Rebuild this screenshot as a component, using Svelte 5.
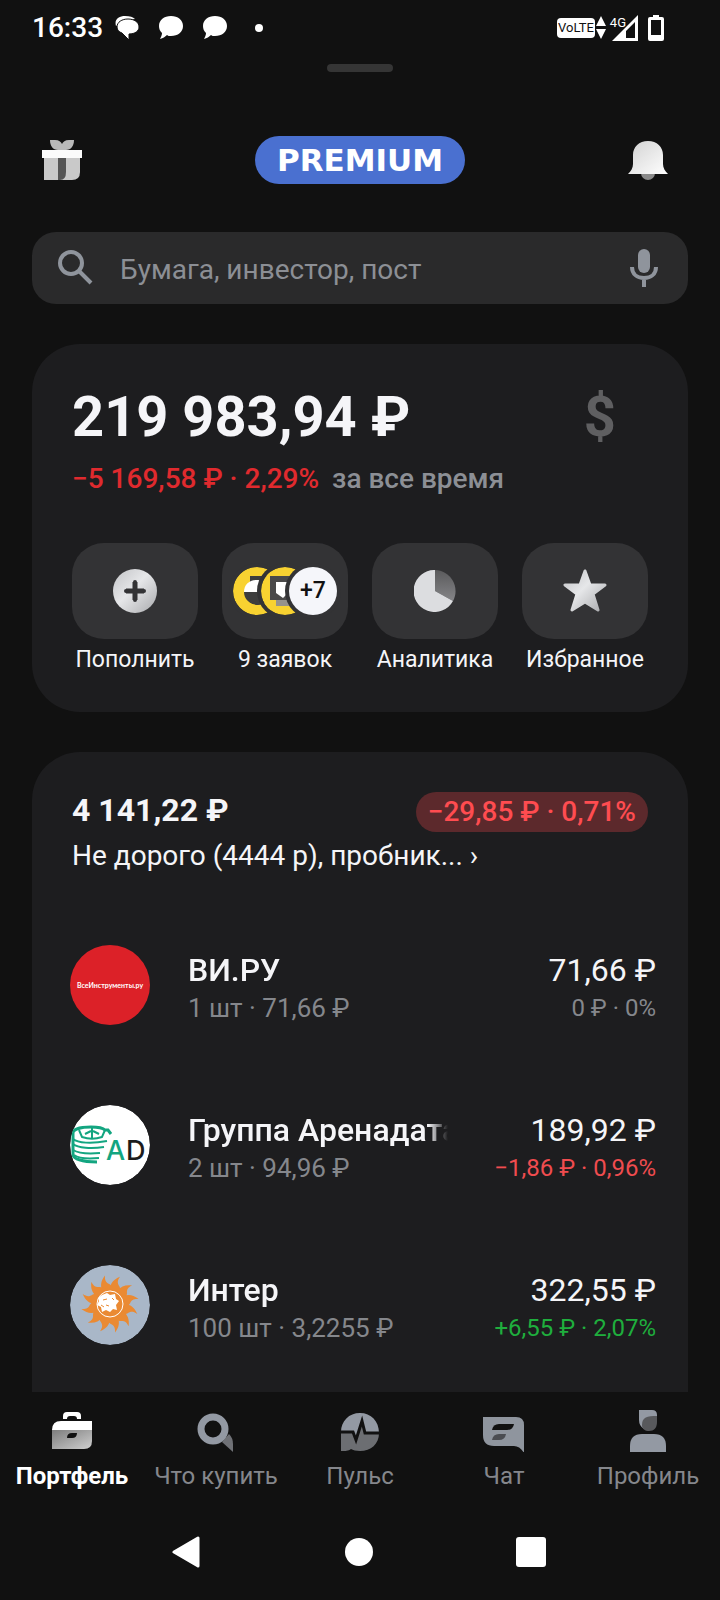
<script>
    let query = ""
    let activeTab = "portfolio"

    const actions = [
        {id: "topup", title: "Пополнить"},
        {id: "orders", title: "9 заявок"},
        {id: "analytics", title: "Аналитика"},
        {id: "favourites", title: "Избранное"}
    ]

    const holdings = [
        {logo: "vi", title: "ВИ.РУ", amount: "1 шт · 71,66 ₽", price: "71,66 ₽", change: "0 ₽ · 0%", trend: "flat"},
        {logo: "ad", title: "Группа Аренадата", amount: "2 шт · 94,96 ₽", price: "189,92 ₽", change: "−1,86 ₽ · 0,96%", trend: "down"},
        {logo: "inter", title: "Интер", amount: "100 шт · 3,2255 ₽", price: "322,55 ₽", change: "+6,55 ₽ · 2,07%", trend: "up"}
    ]

    const tabs = [
        {id: "portfolio", title: "Портфель"},
        {id: "buy", title: "Что купить"},
        {id: "pulse", title: "Пульс"},
        {id: "chat", title: "Чат"},
        {id: "profile", title: "Профиль"}
    ]

    // angles of the sun rays in the Inter logo
    const rays = Array.from({length: 12}, (_, i) => i * 30 - 8)
</script>

<svelte:head>
    <title>Портфель</title>
</svelte:head>

<div class="app">
<div class="status">
    <span class="clock">16:33</span>
    <svg class="bubble" width="24" height="24" viewBox="0 0 24 24">
        <path d="M1 10C-1 3 4 0 10 0c5 0 8 1 10 3l-6 1z" fill="#fff"/>
        <path d="M13 3c6 0 11 3 11 8 0 4-4 7-10 7v6l-7-7C4 16 2 14 2 11c0-5 5-8 11-8z" fill="#fff" stroke="#111" stroke-width="1"/>
    </svg>
    <svg class="bubble" width="24" height="24" viewBox="0 0 24 24">
        <path d="M12 0c7 0 12 4 12 10s-5 10-12 10c-2 0-3 0-4-1-2 2-4 3-7 4 1-2 2-4 2-6C1 15 0 13 0 10 0 4 5 0 12 0z" fill="#fff"/>
    </svg>
    <svg class="bubble" width="24" height="24" viewBox="0 0 24 24">
        <path d="M12 0c7 0 12 4 12 10s-5 10-12 10c-2 0-3 0-4-1-2 2-4 3-7 4 1-2 2-4 2-6C1 15 0 13 0 10 0 4 5 0 12 0z" fill="#fff"/>
    </svg>
    <span class="dot"></span>
    <span class="volte">VoLTE</span>
    <svg class="updown" width="10" height="24" viewBox="0 0 10 24">
        <path d="M5 0l5 10H0zM5 23L0 13h10z" fill="#fff"/>
    </svg>
    <div class="signal">
        <span>4G</span>
        <svg width="26" height="26" viewBox="0 0 26 26">
            <path d="M26 0v26H0zM23 7l-9 9v7h9z" fill="#fff" fill-rule="evenodd"/>
        </svg>
    </div>
    <svg width="16" height="26" viewBox="0 0 16 26">
        <path d="M5 0h6v2h3q2 0 2 2v20q0 2-2 2H2q-2 0-2-2V4q0-2 2-2h3zM3 5v15h10V5z" fill="#fff" fill-rule="evenodd"/>
    </svg>
</div>

<div class="handle"></div>

<header class="top">
    <button class="icon-button" aria-label="Подарки">
        <svg width="40" height="40" viewBox="0 0 40 40">
            <path d="M8 0h5c4 0 6 2 7 4 1-2 3-4 7-4h5c0 6-3 10-8 10h-8C11 10 8 6 8 0z" fill="#b9b9b9"/>
            <path d="M2 18h36v14q0 8-8 8H2z" fill="#c9c9c9"/>
            <path d="M16 18h8v14q0 8-6 8h-2z" fill="#555"/>
            <path d="M0 10h40v8H0z" fill="#fbfbfb"/>
        </svg>
    </button>
    <span class="premium">PREMIUM</span>
    <button class="icon-button" aria-label="Уведомления">
        <svg width="40" height="40" viewBox="0 0 40 40">
            <defs>
                <linearGradient id="bell" x1="0" y1="0" x2="1" y2="1">
                    <stop offset="0" stop-color="#d2d2d2"/>
                    <stop offset="1" stop-color="#fff"/>
                </linearGradient>
            </defs>
            <circle cx="20" cy="33" r="7" fill="#8b8b8b"/>
            <path d="M20 1c9 0 15 6 15 14v9c0 4 2 7 5 10H0c3-3 5-6 5-10v-9C5 7 11 1 20 1z" fill="url(#bell)"/>
        </svg>
    </button>
</header>

<form class="search" on:submit|preventDefault>
    <svg width="36" height="36" viewBox="0 0 36 36">
        <circle cx="13" cy="13" r="11" fill="none" stroke="#8f949c" stroke-width="4"/>
        <path d="M21 21l12 12" stroke="#8f949c" stroke-width="4"/>
    </svg>
    <input type="text" bind:value={query} placeholder="Бумага, инвестор, пост" aria-label="Поиск">
    <button class="icon-button" type="button" aria-label="Голосовой поиск">
        <svg width="28" height="38" viewBox="0 0 28 38">
            <rect x="8" y="0" width="12" height="24" rx="6" fill="#8f949c"/>
            <path d="M2 18c0 7 5 11 12 11s12-4 12-11M14 29v9" fill="none" stroke="#8f949c" stroke-width="4"/>
        </svg>
    </button>
</form>

<main>
    <section class="card">
        <div class="balance">
            <h1>219 983,94 ₽</h1>
            <button class="currency" aria-label="Показать в долларах">$</button>
        </div>
        <p class="total"><span class="loss">−5 169,58 ₽ · 2,29%</span> <span class="period">за все время</span></p>
        <div class="actions">
        {#each actions as action}
            <button class="action">
            <span class="tile">
            {#if action.id == "topup"}
                <svg width="44" height="44" viewBox="0 0 44 44">
                    <defs>
                        <linearGradient id="silver" x1="0" y1="0" x2="1" y2="1">
                            <stop offset="0" stop-color="#c2c3c6"/>
                            <stop offset="0.45" stop-color="#e6e7e9"/>
                            <stop offset="1" stop-color="#a9aaad"/>
                        </linearGradient>
                    </defs>
                    <circle cx="22" cy="22" r="22" fill="url(#silver)"/>
                    <path d="M22 13v18M13 22h18" stroke="#333335" stroke-width="5"/>
                    <path d="M22 13v18M13 22h18" stroke="#333335" stroke-width="4" stroke-linecap="round"/>
                </svg>
            {:else if action.id == "orders"}
                <svg class="coin" width="48" height="48" viewBox="0 0 48 48">
                    <circle cx="24" cy="24" r="24" fill="#f8d231"/>
                    <path d="M17 9h18v16H17z" fill="#3d3d3d"/>
                    <path d="M11 25h26c0 8-5 13-12 13S11 33 11 25z" fill="#3d3d3d"/>
                    <path d="M11 25c0-7 5-12 13-12h4v12z" fill="#fff"/>
                </svg>
                <svg class="coin" width="48" height="48" viewBox="0 0 48 48">
                    <circle cx="24" cy="24" r="24" fill="#f8d231"/>
                    <path d="M15 30h20v9H15z" fill="#96928c"/>
                    <path d="M9 9h25v24H9z" fill="#4a4949"/>
                    <path d="M15 15h14v9l-7 7-7-5z" fill="#fff"/>
                </svg>
                <span class="coin more">+7</span>
            {:else if action.id == "analytics"}
                <svg width="42" height="42" viewBox="0 0 42 42">
                    <defs>
                        <linearGradient id="wedge" x1="0" y1="0" x2="0" y2="1">
                            <stop offset="0" stop-color="#5a5a5c"/>
                            <stop offset="1" stop-color="#858588"/>
                        </linearGradient>
                    </defs>
                    <path d="M21 0a21 21 0 0 1 18 31L21 21z" fill="url(#wedge)"/>
                    <path d="M21 0v21l18 10A21 21 0 1 1 21 0z" fill="#dcdde0"/>
                </svg>
            {:else}
                <svg width="44" height="44" viewBox="0 0 44 44">
                    <path d="M22 2l5 14h15L30 25l5 16-13-8-13 8 5-16L2 16h15z" fill="url(#silver)" stroke="url(#silver)" stroke-width="3" stroke-linejoin="round"/>
                </svg>
            {/if}
            </span>
            {action.title}
            </button>
        {/each}
        </div>
    </section>

    <section class="card account">
        <div class="account-head">
            <h2>4 141,22 ₽</h2>
            <span class="badge">−29,85 ₽ · 0,71%</span>
        </div>
        <a class="account-name" href="#account">Не дорого (4444 р), пробник... ›</a>
        <ul class="holdings">
        {#each holdings as item}
            <li class="holding">
                {#if item.logo == "vi"}
                <span class="logo vi">ВсеИнструменты.ру</span>
                {:else if item.logo == "ad"}
                <svg class="logo" width="80" height="80" viewBox="0 0 80 80">
                    <circle cx="40" cy="40" r="40" fill="#fff"/>
                    <g fill="none" stroke="#13a580" stroke-width="2">
                        <path d="M3 28c0-4 8-6 18-6 8 0 12 1 14 3h3l3 4M3 28v22c1 4 9 7 24 7" stroke-width="3"/>
                        <path d="M9 25l3 7c6 2 14 2 20 0l3-7M22 22v11M15 29l6-3M29 29l-6-3"/>
                        <path d="M3 34c5 4 18 5 34 2M3 39c5 4 18 5 31 3M3 45c5 3 16 4 27 3M4 50c4 3 14 4 25 3"/>
                    </g>
                    <text class="ad-text" x="36" y="55" fill="#13a580">A</text>
                    <text class="ad-text" x="56" y="55" fill="#1c1c1c">D</text>
                </svg>
                {:else}
                <svg class="logo" width="80" height="80" viewBox="0 0 80 80">
                    <circle cx="40" cy="40" r="40" fill="#a9b7c8"/>
                    <g fill="#ea8a33">
                        <circle cx="40" cy="39" r="17"/>
                        {#each rays as angle}
                        <path d="M34 25c-1-6 0-10 5-15-1 5 0 7 3 9 2 2 4 4 4 8z" transform="rotate({angle} 40 39)"/>
                        {/each}
                    </g>
                    <circle cx="40" cy="39" r="13" fill="none" stroke="#fff" stroke-width="1"/>
                    <path d="M32 30l5-2 3 2 5-1 1 5 3 2-3 4 1 5-4-1-3 3-4-2-4 2-1-5-4-2 2-4-1-3z" fill="#fff"/>
                    <path d="M33 35l4-1M36 40l3 1M31 40l3 2M42 33l2 2" stroke="#ea8a33" stroke-width="1"/>
                </svg>
                {/if}
                <div class="info">
                    <h3>{item.title}</h3>
                    <p>{item.amount}</p>
                </div>
                <div class="value">
                    <p class="price">{item.price}</p>
                    <p class="change {item.trend}">{item.change}</p>
                </div>
            </li>
        {/each}
        </ul>
    </section>
</main>

<nav class="tabs">
{#each tabs as tab}
    <a class="tab" class:active={tab.id == activeTab} href="#{tab.id}" on:click={() => activeTab = tab.id}>
    <svg width="44" height="44" viewBox="0 0 44 44">
    {#if tab.id == "portfolio"}
        <defs>
            <linearGradient id="case" x1="0" y1="0" x2="1" y2="1">
                <stop offset="0" stop-color="#7d7d7d"/>
                <stop offset="1" stop-color="#cfcfcf"/>
            </linearGradient>
        </defs>
        <path d="M13 11V8q0-4 4-4h10q4 0 4 4v3h-4q0-3-3-3h-4q-3 0-3 3z" fill="#fff"/>
        <path d="M2 22h40v11q0 8-8 8H2z" fill="url(#case)"/>
        <path d="M2 22q0-9 9-9h31v9z" fill="#fff"/>
        <path d="M17 30q0-5 5-5h5q0 5-5 5z" fill="#111"/>
    {:else if tab.id == "buy"}
        <path d="M28 34l7-8q4 4 4 10v8z" fill="#6f7176"/>
        <circle cx="19" cy="21" r="12" fill="none" stroke="#9399a3" stroke-width="7"/>
    {:else if tab.id == "pulse"}
        <path d="M3 24h12l3 8 6-19 3 12h14c0 11-8 18-19 18-4 0-7-1-9-2-3 2-5 2-10 2z" fill="#6c6e72"/>
        <path d="M3 24C3 13 11 5 22 5s19 8 19 20H27l-3-12-6 19-3-8z" fill="#9399a3"/>
        <path d="M3 24h12l3 8 6-19 3 12h14" fill="none" stroke="#111" stroke-width="3"/>
    {:else if tab.id == "chat"}
        <path d="M1 9h33q8 0 8 8v28q-4-7-10-7H12Q1 38 1 27z" fill="#8f959e"/>
        <path d="M10 22q1-6 7-6h15q-1 6-7 6z" fill="#111"/>
        <path d="M10 32q1-6 7-6h7q-1 6-7 6z" fill="#4b4d52"/>
    {:else}
        <path d="M13 2h13q5 0 5 5v7q-2-4-8-3-6 1-5 10-5-3-5-9z" fill="#9399a3"/>
        <path d="M16 17c0-8 5-9 15-9v6c0 6-3 9-8 9-4 0-7-2-7-6z" fill="#58595c"/>
        <path d="M4 44V38q0-12 12-12h12q12 0 12 12v6z" fill="#9399a3"/>
    {/if}
    </svg>
    {tab.title}
    </a>
{/each}
</nav>

<div class="system">
    <button class="icon-button" aria-label="Назад">
        <svg width="32" height="32" viewBox="0 0 32 32">
            <path d="M3 16L27 2v28z" fill="#fff" stroke="#fff" stroke-width="3" stroke-linejoin="round"/>
        </svg>
    </button>
    <button class="icon-button" aria-label="Домой">
        <svg width="32" height="32" viewBox="0 0 32 32">
            <circle cx="16" cy="16" r="14" fill="#fff"/>
        </svg>
    </button>
    <button class="icon-button" aria-label="Недавние">
        <svg width="32" height="32" viewBox="0 0 32 32">
            <rect x="1" y="1" width="30" height="30" rx="3" fill="#fff"/>
        </svg>
    </button>
</div>
</div>

<style>
    :global(body) {
        background: #111;
    }

    .app {
        display: flex;
        flex-direction: column;
        min-height: 100vh;
        background: #111;
        color: #f5f5f8;
        font-family: Roboto, "Noto Sans", sans-serif;
        font-size: 28px;
        line-height: 36px;
    }

    h1, h2, h3, p, ul {
        margin: 0;
        padding: 0;
    }

    button {
        padding: 0;
        border: none;
        background: none;
        color: inherit;
        font: inherit;
    }

    a {
        color: inherit;
        text-decoration: none;
    }

    svg {
        display: block;
        flex: none;
    }

    .status {
        display: flex;
        align-items: center;
        height: 56px;
        padding: 0 56px 0 32px;
        color: #fff;
    }

    .clock {
        margin-right: 12px;
        font-weight: 500;
    }

    .bubble {
        margin-right: 20px;
    }

    .dot {
        width: 8px;
        height: 8px;
        margin: 0 auto 0 8px;
        border-radius: 50%;
        background: #fff;
    }

    .volte {
        padding: 0 1px;
        border-radius: 4px;
        background: #fff;
        color: #111;
        font-size: 13px;
        line-height: 20px;
    }

    .updown {
        margin: 0 4px 0 1px;
    }

    .signal {
        display: flex;
        margin-right: 10px;
        font-size: 13px;
        line-height: 16px;
    }

    .signal svg {
        margin-left: -14px;
    }

    .handle {
        width: 66px;
        height: 8px;
        margin: 8px auto 0;
        border-radius: 4px;
        background: #353535;
    }

    .top {
        display: grid;
        grid-template-columns: 1fr auto 1fr;
        align-items: center;
        height: 48px;
        margin: 64px 52px 48px 42px;
    }

    .top .icon-button:last-child {
        justify-self: end;
    }

    .top .icon-button:first-child {
        justify-self: start;
    }

    .premium {
        margin-left: 10px;
        padding: 0 22px;
        border-radius: 24px;
        background: #4a70d0;
        color: #fff;
        font-family: "DejaVu Sans", sans-serif;
        font-size: 31px;
        font-weight: 700;
        line-height: 48px;
    }

    .search {
        display: flex;
        align-items: center;
        height: 72px;
        margin: 0 32px 40px;
        padding: 0 30px 0 26px;
        box-sizing: border-box;
        border-radius: 24px;
        background: #2a2a2b;
    }

    .search input {
        flex: 1;
        min-width: 0;
        margin: 0 24px 0 26px;
        padding: 4px 0 0;
        border: none;
        outline: none;
        background: none;
        color: inherit;
        font: inherit;
    }

    .search input::placeholder {
        color: #8c8f95;
        opacity: 1;
    }

    main {
        display: flex;
        flex: 1;
        flex-direction: column;
        gap: 40px;
        margin: 0 32px;
    }

    .card {
        padding: 40px 40px 38px;
        border-radius: 48px;
        background: #1d1d1f;
    }

    .balance {
        display: flex;
        justify-content: space-between;
        padding-right: 32px;
        font-size: 56px;
        font-weight: 700;
        line-height: 66px;
    }

    h1 {
        font-size: 56px;
    }

    .currency {
        color: #5f5f61;
    }

    .total {
        margin: 11px 0 46px;
        font-weight: 500;
    }

    .loss {
        margin-right: 6px;
        color: #e02a2e;
    }

    .period {
        color: #8c8f95;
    }

    .actions {
        display: grid;
        grid-template-columns: repeat(4, 1fr);
        gap: 24px;
    }

    .action {
        display: flex;
        flex-direction: column;
        align-items: center;
        gap: 7px;
        font-size: 23px;
        line-height: 28px;
        white-space: nowrap;
    }

    .tile {
        display: flex;
        align-items: center;
        justify-content: center;
        width: 100%;
        height: 96px;
        border-radius: 32px;
        background: #333335;
    }

    .coin {
        border-radius: 50%;
        box-shadow: 0 0 0 4px #333335;
    }

    .coin + .coin {
        margin-left: -20px;
    }

    .more {
        width: 48px;
        background: #f5f6fa;
        color: #111;
        font-weight: 500;
        line-height: 48px;
    }

    .account {
        flex: 1;
        padding-bottom: 0;
        border-radius: 48px 48px 0 0;
    }

    .account-head {
        display: flex;
        align-items: flex-start;
        justify-content: space-between;
        height: 40px;
    }

    h2 {
        font-size: 32px;
        font-weight: 700;
    }

    .badge {
        padding: 0 12px;
        border-radius: 20px;
        background: #5c292c;
        color: #ff4c50;
        font-weight: 500;
        line-height: 40px;
    }

    .account-name {
        display: block;
        margin: 6px 0 31px;
    }

    .holdings {
        margin: 0 -8px 0 -2px;
        list-style: none;
    }

    .holding {
        display: flex;
        align-items: center;
        height: 160px;
    }

    .logo {
        flex: none;
        width: 80px;
        height: 80px;
        border-radius: 50%;
    }

    .vi {
        background: #dc2128;
        color: #fff;
        font-family: Lato, sans-serif;
        font-size: 7px;
        font-weight: 700;
        line-height: 80px;
        text-align: center;
    }

    .ad-text {
        font-family: Inter, sans-serif;
        font-size: 27px;
        font-weight: 500;
    }

    .info {
        flex: 1;
        min-width: 0;
        margin: 0 46px 0 38px;
        padding-top: 6px;
        color: #85878c;
        font-size: 26px;
        white-space: nowrap;
    }

    h3 {
        overflow: hidden;
        color: #f5f5f8;
        font-size: 32px;
        font-weight: 500;
        line-height: 40px;
        mask-image: linear-gradient(to right, #000 calc(100% - 20px), transparent);
    }

    .value {
        padding-top: 6px;
        text-align: right;
        white-space: nowrap;
    }

    .price {
        font-size: 32px;
        line-height: 40px;
    }

    .change {
        font-size: 24px;
    }

    .flat {
        color: #85878c;
    }

    .down {
        color: #f04c4f;
    }

    .up {
        color: #1fae3d;
    }

    .tabs {
        display: grid;
        grid-template-columns: repeat(5, 1fr);
        height: 112px;
        color: #85878c;
        font-size: 24px;
        line-height: 28px;
    }

    .tab {
        display: flex;
        flex-direction: column;
        align-items: center;
        gap: 10px;
        padding-top: 16px;
        white-space: nowrap;
    }

    .active {
        color: #fff;
        font-weight: 700;
    }

    .system {
        display: flex;
        align-items: center;
        justify-content: center;
        gap: 140px;
        height: 96px;
        padding-right: 2px;
    }
</style>
